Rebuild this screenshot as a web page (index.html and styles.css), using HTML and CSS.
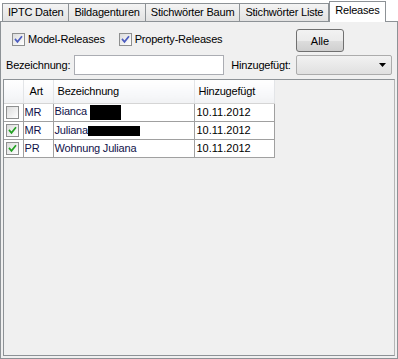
FILE: index.html
```html
<!DOCTYPE html>
<html lang="de">
<head>
    <meta charset="UTF-8">
    <title>Releases</title>
    <link rel="stylesheet" href="styles.css">
</head>
<body>
    <div class="tab-pane">
        <div class="tabs">
            <div class="tab">IPTC Daten</div>
            <div class="tab">Bildagenturen</div>
            <div class="tab">Stichwörter Baum</div>
            <div class="tab">Stichwörter Liste</div>
            <div class="tab active">Releases</div>
        </div>

        <div class="panel">
            <div class="row options">
                <label class="check">
                    <span class="box"><svg viewBox="0 0 13 13"><path d="M3 6.5 L5.3 9.3 L10 3.5" class="tick blue"/></svg></span>
                    Model-Releases
                </label>
                <label class="check">
                    <span class="box"><svg viewBox="0 0 13 13"><path d="M3 6.5 L5.3 9.3 L10 3.5" class="tick blue"/></svg></span>
                    Property-Releases
                </label>
                <button class="btn">Alle</button>
            </div>

            <div class="row filter">
                <span class="lbl">Bezeichnung:</span>
                <input type="text" class="field">
                <span class="lbl">Hinzugefügt:</span>
                <div class="combo">
                    <svg class="arrow" viewBox="0 0 7 4"><path d="M0 0 H7 L3.5 4 Z"/></svg>
                </div>
            </div>

            <div class="scroll">
                <table class="grid">
                    <thead>
                        <tr>
                            <th class="c-chk"></th>
                            <th class="c-art">Art</th>
                            <th class="c-name">Bezeichnung</th>
                            <th class="c-date">Hinzugefügt</th>
                        </tr>
                    </thead>
                    <tbody>
                        <tr>
                            <td class="c-chk"><span class="box small"></span></td>
                            <td class="c-art">MR</td>
                            <td class="c-name">Bianca <span class="redact r1"></span></td>
                            <td class="c-date">10.11.2012</td>
                        </tr>
                        <tr>
                            <td class="c-chk"><span class="box small"><svg viewBox="0 0 13 13"><path d="M3 6.5 L5.3 9.3 L10 3.5" class="tick green"/></svg></span></td>
                            <td class="c-art">MR</td>
                            <td class="c-name">Juliana<span class="redact r2"></span></td>
                            <td class="c-date">10.11.2012</td>
                        </tr>
                        <tr>
                            <td class="c-chk"><span class="box small"><svg viewBox="0 0 13 13"><path d="M3 6.5 L5.3 9.3 L10 3.5" class="tick green"/></svg></span></td>
                            <td class="c-art">PR</td>
                            <td class="c-name">Wohnung Juliana</td>
                            <td class="c-date">10.11.2012</td>
                        </tr>
                    </tbody>
                </table>
            </div>
        </div>
    </div>
</body>
</html>
```

FILE: styles.css
```css
* {
    margin: 0;
    padding: 0;
    box-sizing: border-box;
}

body {
    width: 398px;
    height: 359px;
    background: #ffffff;
    font-family: 'Liberation Sans', Arial, sans-serif;
    font-size: 11px;
    letter-spacing: -0.2px;
    color: #000;
}

.tab-pane {
    display: flex;
    flex-direction: column;
    height: 359px;
}

/* tab strip */
.tabs {
    display: flex;
    align-items: flex-end;
    height: 21px;
    padding-left: 2px;
    position: relative;
    z-index: 1;
}

.tab {
    height: 18px;
    padding: 0 5px;
    margin-right: -1px;
    line-height: 16px;
    border: 1px solid #8d9296;
    border-bottom: none;
    background: linear-gradient(#f4f4f4, #e2e2e2);
    white-space: nowrap;
    color: #000;
}

.tab.active {
    height: 21px;
    margin-left: 1px;
    margin-bottom: -1px;
    padding: 0 5px;
    line-height: 17px;
    background: #fff;
}

/* panel */
.panel {
    flex: 1;
    display: flex;
    flex-direction: column;
    border: 1px solid #8d9296;
    background: #f0f0f0;
    padding: 7px 2px 2px 2px;
}

.row {
    display: flex;
    align-items: center;
}

.options {
    height: 23px;
    padding-left: 9px;
    padding-right: 51px;
}

.check {
    display: flex;
    align-items: center;
    margin-right: 14px;
    margin-bottom: 3px;
    white-space: nowrap;
}

.box {
    display: inline-block;
    width: 13px;
    height: 13px;
    border: 1px solid #8e8f8f;
    background: linear-gradient(135deg, #dcdcdc, #ffffff);
    margin-right: 3px;
    position: relative;
}

.box svg {
    display: block;
    width: 11px;
    height: 11px;
}

.tick {
    fill: none;
    stroke-width: 2;
    stroke-linecap: square;
}

.tick.blue {
    stroke: #4c5cbf;
}

.tick.green {
    stroke: #21a121;
}

.btn {
    margin-left: auto;
    width: 48px;
    height: 23px;
    font-family: inherit;
    font-size: 11px;
    border: 1px solid #707070;
    border-radius: 3px;
    background: linear-gradient(#f2f2f2 0%, #ebebeb 50%, #dddddd 51%, #cfcfcf 100%);
    color: #000;
}

.filter {
    margin-top: 3px;
    height: 20px;
    padding-left: 3px;
}

.lbl {
    white-space: nowrap;
}

.field {
    width: 150px;
    height: 20px;
    margin-left: 4px;
    margin-right: 7px;
    border: 1px solid #abadb3;
    background: #fff;
}

.combo {
    width: 96px;
    height: 20px;
    margin-left: 5px;
    border: 1px solid #acacac;
    border-radius: 2px;
    background: linear-gradient(#f2f2f2, #e0e0e0);
    display: flex;
    align-items: center;
    justify-content: flex-end;
    padding-right: 5px;
}

.arrow {
    width: 7px;
    height: 4px;
    fill: #000;
}

/* table */
.scroll {
    flex: 1;
    margin-top: 4px;
    border: 1px solid #8d9296;
    border-right-color: #b5b5b5;
    background: #f0f0f0;
}

.grid {
    border-collapse: collapse;
    background: #fff;
}

.grid th {
    height: 23px;
    font-weight: normal;
    text-align: left;
    padding-left: 4px;
    background: linear-gradient(#ffffff 0%, #f7f8fa 60%, #f1f2f4 100%);
    border-right: 1px solid #e3e5e8;
    border-bottom: 1px solid #d5d5d5;
}

.grid td {
    height: 18px;
    padding: 0 0 0 1px;
    border: 1px solid #a0a0a0;
    color: #11124a;
    white-space: nowrap;
}

.grid td.c-chk {
    border-left: none;
    padding-left: 2px;
}

.c-chk { width: 19px; }
.c-art { width: 30px; }
.c-name { width: 141px; }
.c-date { width: 80px; }

.grid th.c-art { padding-left: 6px; }

.grid td.c-date {
    color: #000;
    padding-left: 2px;
    letter-spacing: 0;
}

.box.small {
    vertical-align: middle;
    margin: 0;
}

.redact {
    display: inline-block;
    background: #000;
    vertical-align: middle;
}

.r1 {
    width: 31px;
    height: 15px;
}

.r2 {
    width: 52px;
    height: 10px;
}
```
